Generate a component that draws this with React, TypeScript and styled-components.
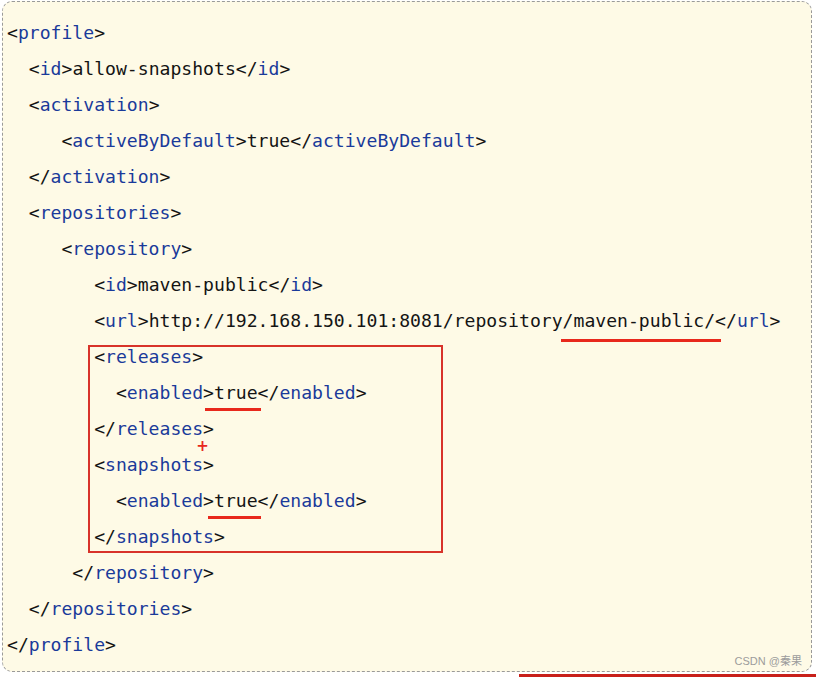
import React from "react";
import styled, { createGlobalStyle } from "styled-components";

const GlobalStyle = createGlobalStyle`
  html, body {
    margin: 0;
    padding: 0;
    background: #ffffff;
  }
`;

type Mark = { word: string; lead: number; tail: number; drop: number };
type Line = { indent: number; text: string; mark?: Mark };

const before: Line[] = [
  { indent: 0, text: "<profile>" },
  { indent: 2, text: "<id>allow-snapshots</id>" },
  { indent: 2, text: "<activation>" },
  { indent: 5, text: "<activeByDefault>true</activeByDefault>" },
  { indent: 2, text: "</activation>" },
  { indent: 2, text: "<repositories>" },
  { indent: 5, text: "<repository>" },
  { indent: 8, text: "<id>maven-public</id>" },
  {
    indent: 8,
    text: "<url>http://192.168.150.101:8081/repository/maven-public/</url>",
    mark: { word: "maven-public/", lead: 12, tail: 6, drop: 11 },
  },
];

// lines inside the red box (indent relative to the box)
const boxed: Line[] = [
  { indent: 0, text: "<releases>" },
  { indent: 2, text: "<enabled>true</enabled>", mark: { word: "true", lead: 9, tail: 3, drop: 8 } },
  { indent: 0, text: "</releases>" },
  { indent: 0, text: "<snapshots>" },
  { indent: 2, text: "<enabled>true</enabled>", mark: { word: "true", lead: 6, tail: 3, drop: 8 } },
  { indent: 0, text: "</snapshots>" },
];

const after: Line[] = [
  { indent: 6, text: "</repository>" },
  { indent: 2, text: "</repositories>" },
  { indent: 0, text: "</profile>" },
];

function colorize(text: string, key: string) {
  const parts: React.ReactNode[] = [];
  const re = /(<\/?)(\w+)(>)/g;
  let last = 0;
  let m: RegExpExecArray | null;
  let i = 0;
  while ((m = re.exec(text))) {
    if (m.index > last) parts.push(text.slice(last, m.index));
    parts.push(m[1]);
    parts.push(<TagName key={key + i++}>{m[2]}</TagName>);
    parts.push(m[3]);
    last = m.index + m[0].length;
  }
  if (last < text.length) parts.push(text.slice(last));
  return parts;
}

function CodeLine({ line, id }: { line: Line; id: string }) {
  const { mark } = line;
  let body: React.ReactNode;
  if (mark) {
    const at = line.text.indexOf(mark.word);
    body = (
      <>
        {colorize(line.text.slice(0, at), id + "a")}
        <Underlined $lead={mark.lead} $tail={mark.tail} $drop={mark.drop}>
          {mark.word}
        </Underlined>
        {colorize(line.text.slice(at + mark.word.length), id + "b")}
      </>
    );
  } else {
    body = colorize(line.text, id);
  }
  return <Row $indent={line.indent}>{body}</Row>;
}

export default function App() {
  return (
    <>
      <GlobalStyle />
      <Page>
        <Panel>
          <Code>
            {before.map((l, i) => (
              <CodeLine key={"b" + i} id={"b" + i} line={l} />
            ))}
            <Boxed>
              {boxed.map((l, i) => (
                <CodeLine key={"x" + i} id={"x" + i} line={l} />
              ))}
              <Plus>+</Plus>
            </Boxed>
            {after.map((l, i) => (
              <CodeLine key={"a" + i} id={"a" + i} line={l} />
            ))}
          </Code>
          <Watermark>CSDN @秦果</Watermark>
        </Panel>
        <BottomBar />
      </Page>
    </>
  );
}

const Page = styled.div`
  width: 816px;
  height: 677px;
  overflow: hidden;
  padding: 1px 0 0 2px;
  box-sizing: border-box;
  display: flex;
  flex-direction: column;
`;

const Panel = styled.div`
  position: relative;
  width: 810px;
  height: 671px;
  box-sizing: border-box;
  border: 1px dashed #9a9a9a;
  border-radius: 10px;
  background: #fefae6;
  padding: 13px 0 0 4px;
`;

const Code = styled.div`
  display: flex;
  flex-direction: column;
  font-family: "DejaVu Sans Mono", "Liberation Mono", monospace;
  font-size: 18.1px;
  line-height: 36px;
  color: #141414;
  white-space: pre;
`;

const Row = styled.div<{ $indent: number }>`
  height: 36px;
  padding-left: ${(p) => p.$indent}ch;
`;

const TagName = styled.span`
  color: #1a3a9a;
`;

const Underlined = styled.span<{ $lead: number; $tail: number; $drop: number }>`
  position: relative;
  &::after {
    content: "";
    position: absolute;
    left: -${(p) => p.$lead}px;
    right: -${(p) => p.$tail}px;
    bottom: -${(p) => p.$drop}px;
    height: 3px;
    background: #e8281c;
  }
`;

const Boxed = styled.div`
  position: relative;
  margin-left: 8ch;
  display: flex;
  flex-direction: column;
  &::before {
    content: "";
    position: absolute;
    top: 6px;
    bottom: 2px;
    left: -6px;
    width: 355px;
    box-sizing: border-box;
    border: 2px solid #d8332a;
  }
`;

const Plus = styled.span`
  position: absolute;
  top: 99px;
  left: 102px;
  font-family: "DejaVu Sans", sans-serif;
  font-size: 15px;
  font-weight: bold;
  line-height: 16px;
  color: #e8281c;
`;

const Watermark = styled.span`
  position: absolute;
  right: 9px;
  bottom: 3px;
  font-family: "Liberation Sans", "Noto Sans CJK SC", sans-serif;
  font-size: 11px;
  color: #9c9c9c;
`;

const BottomBar = styled.div`
  align-self: flex-end;
  width: 301px;
  height: 3px;
  margin-top: 2px;
  margin-right: -4px;
  background: #c8201a;
`;
